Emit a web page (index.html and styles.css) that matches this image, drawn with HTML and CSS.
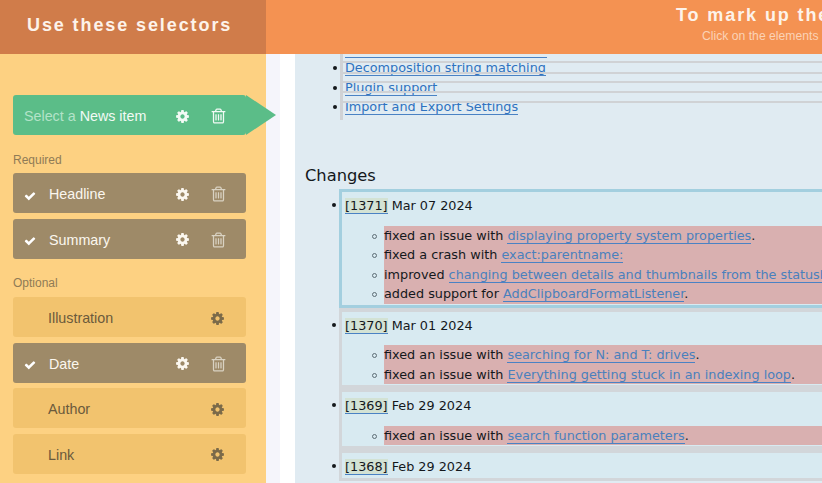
FILE: index.html
```html
<!doctype html>
<html>
  <head>
    <meta charset="utf-8">
    <title>Use these selectors</title>
    <link rel="stylesheet" href="styles.css">
  </head>

  <body>
    <svg class="iconDefs" width="0" height="0">
      <symbol id="gear" viewBox="0 0 1792 1792">
        <path fill-rule="evenodd" d="M1152 896q0-106-75-181t-181-75-181 75-75 181 75 181 181 75 181-75 75-181zm512-109v222q0 12-8 23t-20 13l-185 28q-19 54-39 91 35 50 107 138 10 12 10 25t-9 23q-27 37-99 108t-94 71q-12 0-26-9l-138-108q-44 23-91 38-16 136-29 186-7 28-36 28h-222q-14 0-24.5-8.5t-11.5-21.5l-28-184q-49-16-90-37l-141 107q-10 9-25 9-14 0-25-11-126-114-165-168-7-10-7-23 0-12 8-23 15-21 51-66.5t54-70.5q-27-50-41-99l-183-27q-13-2-21-12.5t-8-23.5v-222q0-12 8-23t19-13l186-28q14-46 39-92-40-57-107-138-10-12-10-24 0-10 9-23 26-36 98.5-107.5t94.5-71.5q13 0 26 10l138 107q44-23 91-38 16-136 29-186 7-28 36-28h222q14 0 24.5 8.5t11.5 21.5l28 184q49 16 90 37l142-107q9-9 24-9 13 0 25 10 129 119 165 170 7 8 7 22 0 12-8 23-15 21-51 66.5t-54 70.5q26 50 41 98l183 28q13 2 21 12.5t8 23.5z"/>
      </symbol>
      <symbol id="trash" viewBox="128 128 1536 1536">
        <path d="M704 736v576q0 14-9 23t-23 9h-64q-14 0-23-9t-9-23v-576q0-14 9-23t23-9h64q14 0 23 9t9 23zm256 0v576q0 14-9 23t-23 9h-64q-14 0-23-9t-9-23v-576q0-14 9-23t23-9h64q14 0 23 9t9 23zm256 0v576q0 14-9 23t-23 9h-64q-14 0-23-9t-9-23v-576q0-14 9-23t23-9h64q14 0 23 9t9 23zm128 724v-948h-896v948q0 22 7 40.5t14.5 27 10.5 8.5h832q3 0 10.5-8.5t14.5-27 7-40.5zm-672-1076h448l-48-117q-7-9-17-11h-317q-10 2-17 11zm928 32v64q0 14-9 23t-23 9h-96v948q0 83-47 143.5t-113 60.5h-832q-66 0-113-58.5t-47-141.5v-952h-96q-14 0-23-9t-9-23v-64q0-14 9-23t23-9h309l70-167q15-37 54-63t79-26h320q40 0 79 26t54 63l70 167h309q14 0 23 9t9 23z"/>
      </symbol>
      <symbol id="check" viewBox="0 0 1792 1792">
        <path d="M1671 566q0 40-28 68l-724 724-136 136q-28 28-68 28t-68-28l-136-136-362-362q-28-28-28-68t28-68l136-136q28-28 68-28t68 28l294 295 656-657q28-28 68-28t68 28l136 136q28 28 28 68z"/>
      </symbol>
    </svg>

    <div id="app">
      <div class="headLeft">Use these selectors</div>
      <div class="headRight">
        <div class="headTitle">To mark up the</div>
        <div class="headHint">Click on the elements</div>
      </div>

      <div class="sidebar">
        <div class="selector news">
          <span class="selectorName"><span class="dim">Select a</span> News item</span>
          <svg class="icon gear"><use href="#gear"></use></svg>
          <svg class="icon trash"><use href="#trash"></use></svg>
        </div>

        <div class="groupLabel firstLabel">Required</div>
        <div class="selector done">
          <svg class="tick"><use href="#check"></use></svg>
          <span class="selectorName">Headline</span>
          <svg class="icon gear"><use href="#gear"></use></svg>
          <svg class="icon trash"><use href="#trash"></use></svg>
        </div>
        <div class="selector done">
          <svg class="tick"><use href="#check"></use></svg>
          <span class="selectorName">Summary</span>
          <svg class="icon gear"><use href="#gear"></use></svg>
          <svg class="icon trash"><use href="#trash"></use></svg>
        </div>

        <div class="groupLabel">Optional</div>
        <div class="selector open">
          <span class="selectorName">Illustration</span>
          <svg class="icon gear"><use href="#gear"></use></svg>
        </div>
        <div class="selector done">
          <svg class="tick"><use href="#check"></use></svg>
          <span class="selectorName">Date</span>
          <svg class="icon gear"><use href="#gear"></use></svg>
          <svg class="icon trash"><use href="#trash"></use></svg>
        </div>
        <div class="selector open">
          <span class="selectorName">Author</span>
          <svg class="icon gear"><use href="#gear"></use></svg>
        </div>
        <div class="selector open">
          <span class="selectorName">Link</span>
          <svg class="icon gear"><use href="#gear"></use></svg>
        </div>
      </div>

      <div class="pageFrame">
        <div class="pageWhite">
          <div class="page">
            <ul class="oldList">
              <li><a>Decomposition string matching</a></li>
              <li><a>Plugin support</a></li>
              <li><a>Import and Export Settings</a></li>
            </ul>

            <h3>Changes</h3>

            <ul class="changes">
              <li class="change current">
                <a class="rev">[1371]</a> Mar 07 2024
                <ul class="notes">
                  <li>fixed an issue with <a>displaying property system properties</a>.</li>
                  <li>fixed a crash with <a>exact:parentname:</a></li>
                  <li>improved <a>changing between details and thumbnails from the statusbar</a></li>
                  <li>added support for <a>AddClipboardFormatListener</a>.</li>
                </ul>
              </li>
              <li class="change">
                <a class="rev">[1370]</a> Mar 01 2024
                <ul class="notes">
                  <li>fixed an issue with <a>searching for N: and T: drives</a>.</li>
                  <li>fixed an issue with <a>Everything getting stuck in an indexing loop</a>.</li>
                </ul>
              </li>
              <li class="change">
                <a class="rev">[1369]</a> Feb 29 2024
                <ul class="notes">
                  <li>fixed an issue with <a>search function parameters</a>.</li>
                </ul>
              </li>
              <li class="change">
                <a class="rev">[1368]</a> Feb 29 2024
              </li>
            </ul>
          </div>
        </div>
      </div>
    </div>
  </body>
</html>
```

FILE: styles.css
```css
html, body {
  margin:0;
  height:100%;
  overflow:hidden;
}

body {
  font-family:"Liberation Sans", Arial, sans-serif;
}

.iconDefs {
  position:absolute;
}

#app {
  display:grid;
  grid-template-columns:266px 1fr;
  grid-template-rows:54px 1fr;
  width:822px;
  height:483px;
  overflow:hidden;
}

/* header bar */

.headLeft {
  background-color:#d07c4a;
  color:#fdf3ea;
  font-size:18px;
  font-weight:700;
  letter-spacing:1.9px;
  line-height:50px;
  padding-left:27px;
  white-space:nowrap;
}

.headRight {
  background-color:#f49252;
  color:#fff;
  padding:5px 0 0 410px;
  white-space:nowrap;
  overflow:hidden;
  position:relative;
  z-index:2;
}

.headTitle {
  font-size:18px;
  font-weight:700;
  letter-spacing:1.9px;
  line-height:20px;
  color:#fdf3ea;
}

.headHint {
  font-size:12.2px;
  line-height:22px;
  padding-left:26px;
  color:#fbd3b6;
}

/* selector column */

.sidebar {
  background-color:#fdd182;
  padding:41px 20px 0 13px;
  position:relative;
  z-index:1;
}

.selector {
  display:flex;
  align-items:center;
  height:40px;
  box-sizing:border-box;
  border-radius:3px;
  margin-bottom:5.5px;
  font-size:14.3px;
  padding-left:35px;
}

.selectorName {
  flex:1;
  white-space:nowrap;
  padding-top:2px;
}

.icon {
  width:15px;
  height:15px;
  fill:currentColor;
  margin-top:2px;
}

.gear {
  margin-right:21px;
}

.trash {
  margin-right:20px;
  width:15px;
  height:16px;
}

.news {
  position:relative;
  background-color:#5bbd88;
  color:#f2faf5;
  padding-left:11px;
  margin-bottom:0;
}

.news::after {
  content:"";
  position:absolute;
  left:100%;
  top:0;
  border-left:30px solid #5bbd88;
  border-top:20px solid transparent;
  border-bottom:20px solid transparent;
}

.dim {
  color:#b3e3c8;
}

.done {
  background-color:#9e8a68;
  color:#fbf7ef;
  padding-left:11px;
}

.done .trash {
  color:#d9d2c2;
}

.tick {
  width:12px;
  height:12px;
  fill:#fff;
  margin:5px 13px 0 0;
}

.open {
  background-color:#f2c36e;
  color:#6b5a3c;
}

.open .gear {
  color:#7b6a49;
}

.groupLabel {
  font-size:12px;
  line-height:14px;
  color:#8f7b56;
  margin:17px 0 7.5px;
}

.firstLabel {
  margin:18px 0 6px;
}

/* marked up page */

.pageFrame {
  background-color:#f5f5fb;
  padding-left:14px;
  min-width:0;
  overflow:hidden;
}

.pageWhite {
  background-color:#fff;
  padding-left:15px;
  height:100%;
}

.page {
  background-color:#e0ebf2;
  height:100%;
  padding-left:10px;
  font-family:"DejaVu Sans", sans-serif;
  font-size:12.8px;
  line-height:19.5px;
  color:#14181c;
  overflow:hidden;
}

.page a {
  color:#2e72c0;
  border-bottom:1px solid #4a82c4;
}

ul {
  margin:0;
  padding:0;
  list-style:none;
}

.oldList li,
.change,
.notes li {
  position:relative;
}

.oldList li::before,
.change::before {
  content:"";
  position:absolute;
  top:8px;
  width:4px;
  height:4px;
  border-radius:50%;
  background-color:#14181c;
}

.oldList li::before {
  left:-12px;
}

.change::before {
  left:-10px;
  top:11px;
}

.notes li::before {
  content:"";
  position:absolute;
  left:-12px;
  top:8px;
  width:3px;
  height:3px;
  border:1px solid #5d6d75;
  border-radius:50%;
}

.oldList {
  position:relative;
  margin-left:35px;
  padding:4px 0 3.5px 2px;
  border-left:3px solid #d0d2d5;
}

/* grey outlines of the items, they sit on top of the text */
.oldList::after {
  content:"";
  position:absolute;
  inset:0;
  background:
    linear-gradient(#4a82c4,#4a82c4) 2px 3px/202px 1px no-repeat,
    linear-gradient(#d0d2d5,#d0d2d5) 0 7px/100% 2px no-repeat,
    linear-gradient(#d0d2d5,#d0d2d5) 0 18px/100% 2px no-repeat,
    linear-gradient(#d0d2d5,#d0d2d5) 0 27px/100% 2px no-repeat,
    linear-gradient(#d0d2d5,#d0d2d5) 0 37px/100% 2px no-repeat,
    linear-gradient(#d0d2d5,#d0d2d5) 0 47px/100% 2px no-repeat,
    linear-gradient(#d0d2d5,#d0d2d5) 0 66px/100% 2px no-repeat;
}

h3 {
  margin:46px 0 3px;
  font-size:16.3px;
  font-weight:400;
  line-height:20px;
}

.changes {
  padding-left:34px;
  white-space:nowrap;
}

.change {
  border:3px solid #d2d6da;
  border-top-width:4px;
  border-right:0;
  background-color:#d8eaf1;
  padding:4px 0 1px 3px;
}

.current {
  border-color:#a3cfdf;
  border-top-width:3px;
}

.rev.rev {
  background-color:#d3e2d4;
  color:#14181c;
}

.notes {
  margin-top:10px;
  background:linear-gradient(#d8eaf1,#d8eaf1) 0 0/39px 100% no-repeat, #d9b0b0;
}

.notes li {
  margin-left:39px;
  height:19.5px;
}

.notes a {
  color:#4a80bd;
}
```
